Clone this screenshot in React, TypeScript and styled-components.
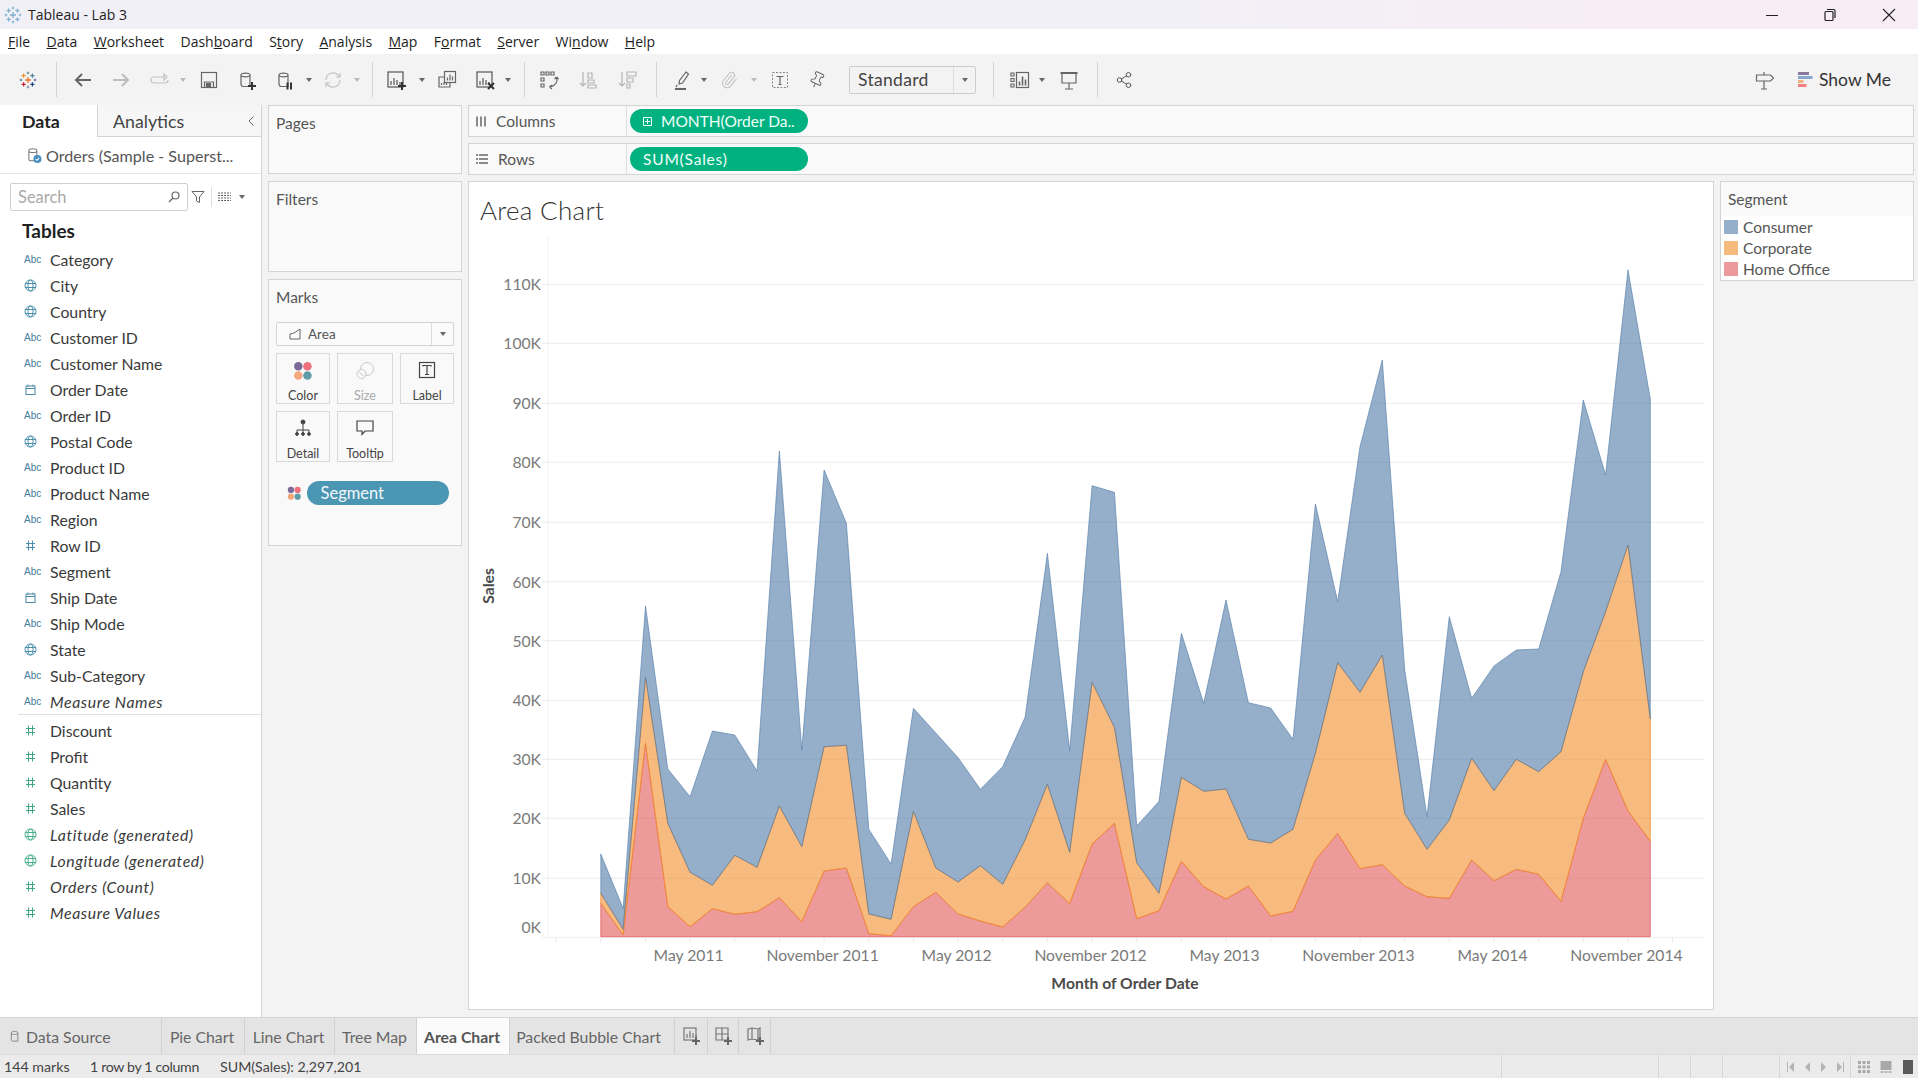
import React from "react";
import styled, { createGlobalStyle } from "styled-components";
import { Paperclip, Pin, Share2 } from "lucide-react";

const GlobalStyle = createGlobalStyle`
  html, body { margin: 0; padding: 0; background: #f3f3f3; }
  body { font-family: "Lato", "Liberation Sans", sans-serif; color: #333; overflow: hidden; }
  * { box-sizing: border-box; }
`;

const Page = styled.div`
  width: 1918px;
  height: 1078px;
  display: flex;
  flex-direction: column;
  overflow: hidden;
`;

/* ---------- window chrome ---------- */
const TitleBar = styled.div`
  height: 29px;
  flex: none;
  display: flex;
  align-items: center;
  padding-left: 4px;
  background: linear-gradient(90deg, #f0f0f6 0%, #f1f0f6 60%, #f8edf5 85%, #f8edf5 100%);
  font-family: "Open Sans", sans-serif;
  font-size: 14px;
  color: #222;
`;
const TitleText = styled.span`
  margin-left: 6px;
`;
const WinButtons = styled.div`
  margin-left: auto;
  display: flex;
`;
const WinButton = styled.div`
  width: 58.5px;
  height: 29px;
  display: flex;
  align-items: center;
  justify-content: center;
`;
const MenuBar = styled.div`
  height: 25px;
  flex: none;
  display: flex;
  align-items: center;
  gap: 16.4px;
  padding-left: 8px;
  background: #fff;
  font-family: "Open Sans", sans-serif;
  font-size: 14px;
  color: #1d1d1d;
`;
const Toolbar = styled.div`
  height: 51px;
  flex: none;
  display: flex;
  align-items: center;
  padding-left: 16px;
  background: #f3f3f3;
`;
const Tool = styled.div<{ $ml?: number; $w?: number }>`
  width: ${(p) => p.$w ?? 24}px;
  height: 24px;
  flex: none;
  margin-left: ${(p) => p.$ml ?? 0}px;
  display: flex;
  align-items: center;
  justify-content: center;
`;
const ToolSep = styled.div<{ $ml: number }>`
  width: 1px;
  height: 35px;
  flex: none;
  margin-left: ${(p) => p.$ml}px;
  background: #d2d2d2;
`;
const Caret = styled.div<{ $c?: string }>`
  width: 0;
  height: 0;
  border-left: 3.5px solid transparent;
  border-right: 3.5px solid transparent;
  border-top: 4px solid ${(p) => p.$c ?? "#666"};
`;
const FitSelect = styled.div`
  width: 127px;
  height: 28px;
  flex: none;
  margin-left: 20px;
  display: flex;
  align-items: center;
  border: 1px solid #cdcdcd;
  border-radius: 2px;
  font-size: 17.5px;
  color: #444;
`;
const FitText = styled.div`
  flex: 1;
  padding-left: 8px;
  letter-spacing: 0.3px;
`;
const FitArrow = styled.div`
  width: 22px;
  height: 100%;
  display: flex;
  align-items: center;
  justify-content: center;
  border-left: 1px solid #dcdcdc;
`;
const ToolRight = styled.div`
  margin-left: auto;
  display: flex;
  align-items: center;
  padding-right: 27px;
`;
const ShowMe = styled.div`
  margin-left: 21px;
  display: flex;
  align-items: center;
  gap: 6px;
  font-size: 17.5px;
  color: #333;
`;

/* ---------- main area ---------- */
const Main = styled.div`
  flex: 1;
  min-height: 0;
  display: flex;
  background: #f3f3f3;
`;
const DataPane = styled.div`
  width: 262px;
  flex: none;
  background: #fff;
  border-right: 1px solid #d4d4d4;
  display: flex;
  flex-direction: column;
`;
const PaneTabs = styled.div`
  height: 32px;
  flex: none;
  display: flex;
  font-size: 17.8px;
`;
const DataTab = styled.div`
  width: 98px;
  padding-left: 22px;
  display: flex;
  align-items: center;
  font-weight: 700;
  color: #222;
  border-right: 1px solid #d4d4d4;
  background: #fff;
`;
const AnalyticsTab = styled.div`
  flex: 1;
  padding-left: 15px;
  display: flex;
  align-items: center;
  color: #444;
  background: #f6f6f6;
  border-bottom: 1px solid #d4d4d4;
`;
const Collapse = styled.div`
  margin-left: auto;
  margin-right: 6px;
  display: flex;
`;
const SourceRow = styled.div`
  height: 37px;
  flex: none;
  display: flex;
  align-items: center;
  gap: 4px;
  padding-left: 26px;
  border-bottom: 1px solid #e6e6e6;
  font-size: 16.1px;
  color: #555;
`;
const SearchRow = styled.div`
  height: 28px;
  flex: none;
  margin-top: 9px;
  display: flex;
  align-items: center;
  padding-left: 10px;
`;
const SearchBox = styled.div`
  width: 178px;
  height: 28px;
  display: flex;
  align-items: center;
  justify-content: space-between;
  padding: 0 6px 0 7px;
  border: 1px solid #cfcfcf;
  border-radius: 2px;
  font-size: 16.5px;
  color: #a9a9a9;
`;
const SearchTool = styled.div<{ $ml: number }>`
  margin-left: ${(p) => p.$ml}px;
  display: flex;
  align-items: center;
`;
const SearchSep = styled.div`
  width: 1px;
  height: 20px;
  margin-left: 6px;
  background: #dedede;
`;
const SectionTitle = styled.div`
  height: 22px;
  margin: 8px 0 5px 22px;
  display: flex;
  align-items: center;
  font-size: 19px;
  font-weight: 700;
  color: #1f1f1f;
`;
const FieldList = styled.div`
  display: flex;
  flex-direction: column;
`;
const FieldRow = styled.div<{ $italic?: boolean }>`
  height: 26px;
  display: flex;
  align-items: center;
  font-size: 15.8px;
  font-style: ${(p) => (p.$italic ? "italic" : "normal")};
  letter-spacing: ${(p) => (p.$italic ? "0.6px" : "0")};
  color: #3a3a3a;
`;
const FieldIconBox = styled.div`
  width: 50px;
  flex: none;
  padding-left: 24px;
  display: flex;
  align-items: center;
`;
const AbcTag = styled.span`
  font-family: "Liberation Sans", sans-serif;
  font-size: 10px;
  font-style: normal;
  letter-spacing: 0;
  color: #3f7d9b;
`;
const FieldDivider = styled.div`
  height: 1px;
  margin: 0 0 2px 18px;
  background: #e0e0e0;
`;

const MiddleCol = styled.div`
  width: 194px;
  flex: none;
  margin-left: 6px;
  display: flex;
  flex-direction: column;
  gap: 7px;
`;
const Card = styled.div<{ $h: number }>`
  height: ${(p) => p.$h}px;
  flex: none;
  padding: 8px 7px;
  background: #f9f9f9;
  border: 1px solid #d4d4d4;
  font-size: 15.5px;
  color: #555;
`;
const MarkSelect = styled.div`
  height: 24px;
  margin-top: 16px;
  display: flex;
  align-items: center;
  background: #fbfbfb;
  border: 1px solid #d4d4d4;
  border-radius: 2px;
  font-size: 13.5px;
`;
const MarkName = styled.div`
  flex: 1;
  display: flex;
  align-items: center;
  gap: 5px;
  padding-left: 12px;
`;
const MarkArrow = styled.div`
  width: 22px;
  height: 100%;
  display: flex;
  align-items: center;
  justify-content: center;
  border-left: 1px solid #dcdcdc;
`;
const MarkGrid = styled.div`
  margin-top: 7px;
  display: grid;
  grid-template-columns: 54px 56px 54px;
  grid-auto-rows: 51px;
  gap: 7px;
`;
const MarkBtn = styled.div<{ $off?: boolean }>`
  display: flex;
  flex-direction: column;
  align-items: center;
  justify-content: space-between;
  padding: 7px 0 0;
  border: 1px solid #d8d8d8;
  font-size: 12.5px;
  line-height: 14px;
  color: ${(p) => (p.$off ? "#aaa" : "#444")};
`;
const SegmentRow = styled.div`
  margin-top: 19px;
  display: flex;
  align-items: center;
  gap: 5px;
  padding-left: 11px;
`;
const SegmentPill = styled.div`
  width: 142px;
  height: 24px;
  padding-left: 14px;
  display: flex;
  align-items: center;
  border-radius: 12px;
  background: #4a96b3;
  font-size: 16.5px;
  color: #f2f8fa;
`;

const RightCol = styled.div`
  flex: 1;
  min-width: 0;
  margin-left: 6px;
  padding: 0 4px 7px 0;
  display: flex;
  flex-direction: column;
  gap: 6px;
`;
const Shelf = styled.div`
  height: 32px;
  flex: none;
  display: flex;
  align-items: center;
  background: #f9f9f9;
  border: 1px solid #d4d4d4;
`;
const ShelfLabel = styled.div`
  width: 158px;
  height: 100%;
  flex: none;
  display: flex;
  align-items: center;
  gap: 10px;
  padding-left: 7px;
  border-right: 1px solid #dedede;
  font-size: 15.5px;
  color: #555;
`;
const GreenPill = styled.div<{ $wide?: boolean }>`
  width: 178px;
  height: 24px;
  margin-left: 3px;
  display: flex;
  align-items: center;
  gap: 9px;
  padding-left: 13px;
  border-radius: 12px;
  background: #02b180;
  font-size: 15.5px;
  letter-spacing: ${(p) => (p.$wide ? "0.8px" : "0")};
  color: #effff9;
`;
const VizRow = styled.div`
  flex: 1;
  min-height: 0;
  display: flex;
  gap: 6px;
`;
const VizCard = styled.div`
  width: 1246px;
  flex: none;
  display: flex;
  flex-direction: column;
  background: #fff;
  border: 1px solid #d4d4d4;
  overflow: hidden;
`;
const VizTitle = styled.div`
  height: 50px;
  flex: none;
  padding: 12px 0 0 11px;
  font-size: 26px;
  font-weight: 300;
  color: #333;
  letter-spacing: 0.3px;
`;
const Legend = styled.div`
  width: 194px;
  height: 100px;
  flex: none;
  display: flex;
  flex-direction: column;
  background: #fff;
  border: 1px solid #d4d4d4;
`;
const LegendHead = styled.div`
  height: 34px;
  flex: none;
  display: flex;
  align-items: center;
  padding-left: 7px;
  background: #f9f9f9;
  font-size: 15.5px;
  color: #555;
`;
const LegendItem = styled.div`
  height: 21px;
  flex: none;
  display: flex;
  align-items: center;
  gap: 5px;
  padding-left: 3px;
  font-size: 15.5px;
  color: #555;
`;
const Swatch = styled.div<{ $c: string }>`
  width: 14px;
  height: 14px;
  background: ${(p) => p.$c};
`;

/* ---------- sheet tabs and status ---------- */
const SheetTabs = styled.div`
  height: 37px;
  flex: none;
  display: flex;
  background: #e4e4e4;
  border-top: 1px solid #d4d4d4;
  font-size: 15.8px;
  color: #666;
`;
const SheetTab = styled.div<{ $w: number; $active?: boolean; $pr?: number }>`
  width: ${(p) => p.$w}px;
  flex: none;
  display: flex;
  align-items: center;
  justify-content: center;
  padding-right: ${(p) => p.$pr ?? 2}px;
  border-right: 1px solid #d2d2d2;
  background: ${(p) => (p.$active ? "#fbfbfb" : "transparent")};
  font-weight: ${(p) => (p.$active ? 700 : 400)};
  color: ${(p) => (p.$active ? "#555" : "#666")};
`;
const SourceTab = styled(SheetTab)`
  justify-content: flex-start;
  gap: 4px;
  padding-left: 9px;
`;
const StatusBar = styled.div`
  height: 24px;
  flex: none;
  display: flex;
  align-items: center;
  background: #ebebeb;
  border-top: 1px solid #dcdcdc;
  font-size: 14.2px;
  color: #444;
`;
const StatusText = styled.span<{ $w: number; $pl?: number; $tight?: boolean }>`
  width: ${(p) => p.$w}px;
  padding-left: ${(p) => p.$pl ?? 0}px;
  letter-spacing: ${(p) => (p.$tight ? "-0.35px" : "0")};
  flex: none;
`;
const StatusCell = styled.div<{ $w: number }>`
  width: ${(p) => p.$w}px;
  height: 100%;
  flex: none;
  display: flex;
  align-items: center;
  padding: 0 4px;
  border-left: 1px solid #d6d6d6;
`;

/* ---------- chart data, in page pixels ---------- */
const X0 = 600.8;
const STEP = 22.33;
const BASE = 936.7;
const topLine = [854, 908.3, 606, 769, 796.7, 731, 735, 771, 451, 750, 470, 523.3, 829.3, 864, 708.3, 733, 757.7, 789.3, 766.7, 717.3, 553.3, 750.7, 485.7, 492.3, 826, 801.3, 633.3, 703.3, 600, 702.7, 708, 739.3, 504, 601.7, 446.7, 360, 670, 816.7, 616.7, 698.3, 666, 650, 649, 571.7, 400, 475, 270, 399];
const midLine = [893.3, 929.3, 677.3, 823.3, 872.3, 885.3, 855.3, 867.3, 806, 846.7, 746.7, 745.3, 914, 919.3, 811.3, 868, 882, 865.7, 884.3, 840, 784.3, 852.3, 682.3, 727.3, 862.7, 893.3, 777.3, 791.3, 789, 839.3, 843, 829.3, 753.3, 662.7, 692.3, 655, 813.3, 849.3, 820, 758.3, 790.7, 759.3, 771.7, 751.7, 671.7, 611.7, 545, 719];
const lowLine = [903.3, 935, 743.3, 906.7, 926.7, 908.7, 914.3, 911.7, 897.7, 921.7, 871, 868, 933.7, 935.7, 906.7, 892.3, 914, 921, 927, 907.3, 882.7, 903.7, 844, 823.3, 918.7, 910.7, 861.3, 886.7, 899, 886, 916, 911.3, 860, 833.3, 868.7, 864.7, 886, 896.7, 898.3, 860, 880.7, 869.3, 874.3, 901.3, 818.3, 759.3, 811, 841.3];

const xAt = (i: number) => X0 + STEP * i;
const forward = (ys: number[]) => ys.map((y, i) => `${xAt(i).toFixed(1)},${y}`);
const band = (upper: number[], lower: number[]) =>
  [...forward(upper), ...forward(lower).reverse()].join(" ");

const yTicks = [
  { t: "110K", y: 284.3 },
  { t: "100K", y: 343.3 },
  { t: "90K", y: 403.3 },
  { t: "80K", y: 462.3 },
  { t: "70K", y: 522.3 },
  { t: "60K", y: 581.7 },
  { t: "50K", y: 640.7 },
  { t: "40K", y: 700.3 },
  { t: "30K", y: 759.3 },
  { t: "20K", y: 818.3 },
  { t: "10K", y: 878.3 },
];
const xLabels = [
  { t: "May 2011", i: 4 },
  { t: "November 2011", i: 10 },
  { t: "May 2012", i: 16 },
  { t: "November 2012", i: 22 },
  { t: "May 2013", i: 28 },
  { t: "November 2013", i: 34 },
  { t: "May 2014", i: 40 },
  { t: "November 2014", i: 46 },
];
const minorTicks = Array.from({ length: 26 }, (_, k) => -2 + k * 2);

const AxisText = styled.text`
  font-family: "Lato", sans-serif;
  font-size: 15.7px;
  fill: #7a7a7a;
`;
const AxisTitle = styled.text`
  font-family: "Lato", sans-serif;
  font-size: 15.7px;
  font-weight: 700;
  fill: #4a4a4a;
`;

function AreaChart() {
  const zero = lowLine.map(() => BASE);
  return (
    <svg width={1244} height={777} viewBox="469 232 1244 777">
      <line x1={548} x2={548} y1={236} y2={937} stroke="#f2f2f2" />
      {yTicks.map((t) => (
        <g key={t.t}>
          <line x1={542} x2={1704} y1={t.y} y2={t.y} stroke="#f0f0f0" strokeWidth={1.2} />
          <AxisText x={541} y={t.y + 6} textAnchor="end">{t.t}</AxisText>
        </g>
      ))}
      <line x1={542} x2={1704} y1={937.3} y2={937.3} stroke="#efefef" />
      <AxisText x={541} y={933} textAnchor="end">0K</AxisText>
      {minorTicks.map((i) => (
        <line key={i} x1={xAt(i)} x2={xAt(i)} y1={937} y2={943} stroke="#ececec" />
      ))}
      <polygon points={band(lowLine, zero)} fill="#e15759" fillOpacity={0.6} stroke="#e15759" strokeOpacity={0.7} />
      <polygon points={band(midLine, lowLine)} fill="#f28e2b" fillOpacity={0.6} stroke="#f28e2b" strokeOpacity={0.75} />
      <polygon points={band(topLine, midLine)} fill="#4e79a7" fillOpacity={0.6} stroke="#4e79a7" strokeOpacity={0.6} />
      {xLabels.map((l) => (
        <AxisText key={l.t} x={xAt(l.i) - 1.5} y={961} textAnchor="middle">{l.t}</AxisText>
      ))}
      <AxisTitle x={1125} y={989} textAnchor="middle">Month of Order Date</AxisTitle>
      <AxisTitle transform="translate(494 586) rotate(-90)" textAnchor="middle">Sales</AxisTitle>
    </svg>
  );
}

/* ---------- icons ---------- */
const TableauMark = ({ faded }: { faded?: boolean }) => {
  const tone = (col: string) => (faded ? "#7fb0d0" : col);
  const plus = (x: number, y: number, r: number, w: number, col: string) => (
    <path d={`M${x - r} ${y}H${x + r}M${x} ${y - r}V${y + r}`} stroke={tone(col)} strokeWidth={w} />
  );
  return (
    <svg width={18} height={18} viewBox="0 0 18 18" fill="none">
      {plus(9, 2, 1.4, 1, "#5b879b")}
      {plus(2, 9, 1.4, 1, "#5b879b")}
      {plus(16, 9, 1.4, 1, "#5b6f9b")}
      {plus(9, 16, 1.4, 1, "#7a8fa5")}
      {plus(4.6, 4.6, 2.1, 1.2, "#eb912b")}
      {plus(13.4, 4.6, 2.1, 1.2, "#4f8199")}
      {plus(4.6, 13.4, 2.1, 1.2, "#c72035")}
      {plus(13.4, 13.4, 2.1, 1.2, "#1f447e")}
      {plus(9, 9, 3, 1.3, "#e8762b")}
    </svg>
  );
};

const Glyph = ({ c = "#666", children, w = 24 }: { c?: string; children: React.ReactNode; w?: number }) => (
  <svg width={w} height={24} viewBox={`0 0 ${w} 24`} fill="none" stroke={c} strokeWidth={1.2}>
    {children}
  </svg>
);
const CylinderPath = "M6 7c0-2.6 9-2.6 9 0v11.5H8.5A2.5 2.5 0 0 1 6 16zM6 7c0 2.4 9 2.4 9 0";
const ChartBox = ({ x = 5, y = 5, s = 14 }: { x?: number; y?: number; s?: number }) => (
  <>
    <rect x={x} y={y} width={s} height={s} />
    <path d={`M${x + 3} ${y + s - 2}v-4M${x + 6} ${y + s - 2}v-7M${x + 9} ${y + s - 2}v-5M${x + 12} ${y + s - 2}v-3`} />
  </>
);
const BlackPlus = ({ x, y, c = "#333" }: { x: number; y: number; c?: string }) => (
  <path d={`M${x - 4} ${y}h8M${x} ${y - 4}v8`} stroke={c} strokeWidth={2} />
);

const GlobeIcon = ({ c }: { c: string }) => (
  <svg width={13} height={13} viewBox="0 0 13 13" fill="none" stroke={c} strokeWidth={1}>
    <circle cx={6.5} cy={6.5} r={5.5} />
    <ellipse cx={6.5} cy={6.5} rx={2.5} ry={5.5} />
    <path d="M1 4.5h11M1 8.5h11" />
  </svg>
);
const CalendarIcon = ({ c }: { c: string }) => (
  <svg width={13} height={13} viewBox="0 0 13 13" fill="none" stroke={c} strokeWidth={1}>
    <rect x={2} y={3} width={9} height={8.5} />
    <path d="M2 5.5h9M4 1.5v2M9 1.5v2" />
  </svg>
);
const HashIcon = ({ c }: { c: string }) => (
  <svg width={13} height={13} viewBox="0 0 13 13" fill="none" stroke={c} strokeWidth={1}>
    <path d="M4.5 1.5v10M8.5 1.5v10M2 4.5h9M2 8.5h9" />
  </svg>
);
const CylinderSmall = ({ c = "#777", s = 14, badge }: { c?: string; s?: number; badge?: boolean }) => (
  <svg width={s} height={s} viewBox="0 0 14 14" fill="none" stroke={c} strokeWidth={0.9}>
    <path d="M2.500 3c0-2 7-2 7 0v9H4S2.500 12 2.500 10.500zM2.500 3.500c0 1.800 7 1.800 7 0" />
    {badge && (
      <>
        <circle cx={10} cy={10.500} r={3.500} fill="#4a8fc0" stroke="none" />
        <path d="M8.400 10.500l1.200 1.200 2-2.200" stroke="#fff" />
      </>
    )}
  </svg>
);
const FourDots = ({ r }: { r: number }) => (
  <svg width={r * 5.2} height={r * 5.2} viewBox="0 0 26 26">
    <circle cx={7} cy={7} r={5.6} fill="#7b6a96" />
    <circle cx={19} cy={7} r={5.6} fill="#ef6f7d" />
    <circle cx={7} cy={19} r={5.6} fill="#f4a77c" />
    <circle cx={19} cy={19} r={5.6} fill="#5f9ba6" />
  </svg>
);

type Kind = "abc" | "globe" | "date" | "hash" | "mHash" | "mGlobe";
const FieldIcon = ({ kind }: { kind: Kind }) => {
  if (kind === "abc") return <AbcTag>Abc</AbcTag>;
  if (kind === "globe") return <GlobeIcon c="#4a90ad" />;
  if (kind === "date") return <CalendarIcon c="#4a86a3" />;
  if (kind === "hash") return <HashIcon c="#4a90ad" />;
  if (kind === "mGlobe") return <GlobeIcon c="#4db08d" />;
  return <HashIcon c="#3fa781" />;
};

const dimensions: { n: string; k: Kind; i?: boolean }[] = [
  { n: "Category", k: "abc" },
  { n: "City", k: "globe" },
  { n: "Country", k: "globe" },
  { n: "Customer ID", k: "abc" },
  { n: "Customer Name", k: "abc" },
  { n: "Order Date", k: "date" },
  { n: "Order ID", k: "abc" },
  { n: "Postal Code", k: "globe" },
  { n: "Product ID", k: "abc" },
  { n: "Product Name", k: "abc" },
  { n: "Region", k: "abc" },
  { n: "Row ID", k: "hash" },
  { n: "Segment", k: "abc" },
  { n: "Ship Date", k: "date" },
  { n: "Ship Mode", k: "abc" },
  { n: "State", k: "globe" },
  { n: "Sub-Category", k: "abc" },
  { n: "Measure Names", k: "abc", i: true },
];
const measures: { n: string; k: Kind; i?: boolean }[] = [
  { n: "Discount", k: "mHash" },
  { n: "Profit", k: "mHash" },
  { n: "Quantity", k: "mHash" },
  { n: "Sales", k: "mHash" },
  { n: "Latitude (generated)", k: "mGlobe", i: true },
  { n: "Longitude (generated)", k: "mGlobe", i: true },
  { n: "Orders (Count)", k: "mHash", i: true },
  { n: "Measure Values", k: "mHash", i: true },
];

export default function App() {
  return (
    <Page>
      <GlobalStyle />
      <TitleBar>
        <TableauMark faded />
        <TitleText>Tableau - Lab 3</TitleText>
        <WinButtons>
          <WinButton>
            <svg width={14} height={14} viewBox="0 0 14 14" stroke="#222"><path d="M1 7.500h12" /></svg>
          </WinButton>
          <WinButton>
            <svg width={14} height={14} viewBox="0 0 14 14" fill="none" stroke="#222" strokeWidth={1.2}>
              <rect x={2} y={3.500} width={8} height={9} rx={1} />
              <path d="M4 1.500h6.500a1.500 1.500 0 0 1 1.500 1.500v7" />
            </svg>
          </WinButton>
          <WinButton>
            <svg width={14} height={14} viewBox="0 0 14 14" stroke="#222" strokeWidth={1.1}><path d="M1 1l12 12M13 1L1 13" /></svg>
          </WinButton>
        </WinButtons>
      </TitleBar>
      <MenuBar>
        <span><u>F</u>ile</span>
        <span><u>D</u>ata</span>
        <span><u>W</u>orksheet</span>
        <span>Dash<u>b</u>oard</span>
        <span>S<u>t</u>ory</span>
        <span><u>A</u>nalysis</span>
        <span><u>M</u>ap</span>
        <span>F<u>o</u>rmat</span>
        <span><u>S</u>erver</span>
        <span>Wi<u>n</u>dow</span>
        <span><u>H</u>elp</span>
      </MenuBar>
      <Toolbar>
        <Tool><TableauMark /></Tool>
        <ToolSep $ml={16} />
        <Tool $ml={14}><Glyph c="#666"><path d="M20 12H5M11 6l-6 6 6 6" strokeWidth={2} /></Glyph></Tool>
        <Tool $ml={14}><Glyph c="#bcbcbc"><path d="M4 12h15M13 6l6 6-6 6" strokeWidth={2} /></Glyph></Tool>
        <Tool $ml={14}><Glyph c="#c4c4c4"><path d="M17 9H7a3 3 0 0 0 0 6h11a3 3 0 0 0 3-3M17 6v6l3-3z" /></Glyph></Tool>
        <Tool $ml={7} $w={10}><Caret $c="#bbb" /></Tool>
        <Tool $ml={9}>
          <Glyph c="#666">
            <rect x={4.500} y={4.500} width={15} height={15} />
            <path d="M7.500 19v-5h9v5" />
            <rect x={9.500} y={15.500} width={4} height={3.500} fill="#666" />
          </Glyph>
        </Tool>
        <Tool $ml={14}><Glyph c="#666"><path d={CylinderPath} /><BlackPlus x={17} y={18} /></Glyph></Tool>
        <Tool $ml={14}><Glyph c="#666"><path d={CylinderPath} /><path d="M14.500 14.500v7M18 14.500v7" stroke="#333" strokeWidth={2} /></Glyph></Tool>
        <Tool $ml={7} $w={10}><Caret /></Tool>
        <Tool $ml={7}><Glyph c="#c4c4c4"><path d="M5 12a7 7 0 0 1 12-5l2 2M19 12a7 7 0 0 1-12 5l-2-2M19 5v4h-4M5 19v-4h4" /></Glyph></Tool>
        <Tool $ml={7} $w={10}><Caret $c="#bbb" /></Tool>
        <ToolSep $ml={10} />
        <Tool $ml={11}><Glyph c="#555"><ChartBox x={4} y={4} s={15} /><BlackPlus x={18} y={18} /></Glyph></Tool>
        <Tool $ml={9} $w={10}><Caret /></Tool>
        <Tool $ml={8}>
          <Glyph c="#666">
            <rect x={9.500} y={3.500} width={11} height={11} />
            <path d="M12.500 12.500v-3M15 12.500v-6M17.500 12.500v-4M9.500 9H4v10h11v-4.500M6.500 17v-2M9 17v-3M11.500 17v-2" />
          </Glyph>
        </Tool>
        <Tool $ml={14}><Glyph c="#555"><ChartBox x={4} y={4} s={15} /><path d="M15 15l6 6M21 15l-6 6" stroke="#333" strokeWidth={2} /></Glyph></Tool>
        <Tool $ml={6} $w={10}><Caret /></Tool>
        <ToolSep $ml={11} />
        <Tool $ml={12}>
          <Glyph c="#666">
            <path d="M4 4h3v3H4zM9 4h3v3H9zM14 4h3v3h-3zM4 10h3v3H4zM4 16h3v3H4z" />
            <path d="M19.500 9c1.500 5-1 9-7 10M12.500 19l2.500-2M12.500 19l2.500 2M19.500 9l-2 2M19.500 9l2 2" />
          </Glyph>
        </Tool>
        <Tool $ml={16}>
          <Glyph c="#b5b5b5">
            <path d="M6 4v14M3 15l3 3 3-3" />
            <path d="M11 5h4v5h-4zM11 12h6v3h-6zM11 17h8v3h-8z" />
          </Glyph>
        </Tool>
        <Tool $ml={15}>
          <Glyph c="#b5b5b5">
            <path d="M6 4v14M3 15l3 3 3-3" />
            <path d="M11 4h9v4h-9zM11 10h6v4h-6zM11 16h3v4h-3z" />
          </Glyph>
        </Tool>
        <ToolSep $ml={16} />
        <Tool $ml={14}>
          <Glyph c="#666">
            <path d="M15 4l2.500 2-6 9-3.500 1 .5-3.500z" />
            <path d="M6 17l-1 2" />
            <path d="M4 21h11" strokeWidth={2} />
          </Glyph>
        </Tool>
        <Tool $ml={4} $w={10}><Caret /></Tool>
        <Tool $ml={8}><Paperclip size={18} color="#c2c2c2" strokeWidth={1.4} style={{ transform: "rotate(-5deg)" }} /></Tool>
        <Tool $ml={8} $w={10}><Caret $c="#bbb" /></Tool>
        <Tool $ml={9}>
          <Glyph c="#888">
            <rect x={4.500} y={4.500} width={15} height={15} strokeDasharray="2 1.500" strokeWidth={1} />
            <path d="M8.500 8.500h7M12 8.500v8M10.500 16.500h3" stroke="#666" />
          </Glyph>
        </Tool>
        <Tool $ml={13}><Pin size={18} color="#666" strokeWidth={1.3} style={{ transform: "rotate(25deg)" }} /></Tool>
        <FitSelect>
          <FitText>Standard</FitText>
          <FitArrow><Caret /></FitArrow>
        </FitSelect>
        <ToolSep $ml={17} />
        <Tool $ml={14}>
          <Glyph c="#666">
            <path d="M3 5h3v3H3zM3 10.500h3v3H3zM3 16h3v3H3z" />
            <rect x={8.500} y={4.500} width={12} height={15} />
            <path d="M11.500 17.500v-4M14.500 17.500v-9M17.500 17.500v-6" strokeWidth={1.600} />
          </Glyph>
        </Tool>
        <Tool $ml={5} $w={10}><Caret /></Tool>
        <Tool $ml={10}>
          <Glyph c="#666">
            <path d="M3.500 5h17" strokeWidth={2} />
            <path d="M5 5v10h14V5M12 15v6M8 21h8" />
          </Glyph>
        </Tool>
        <ToolSep $ml={16} />
        <Tool $ml={14}><Share2 size={18} color="#555" strokeWidth={1.3} /></Tool>
        <ToolRight>
          <Glyph c="#666">
            <path d="M3.500 7h14l3 3-3 3h-14zM11 4v3M11 13v8M8 21h6" />
          </Glyph>
          <ShowMe>
            <svg width={15} height={16} viewBox="0 0 15 16">
              <rect y={0} width={11} height={3} fill="#8a7aa0" />
              <rect y={4} width={14.500} height={3} fill="#86a8cf" />
              <rect y={8} width={5.500} height={3} fill="#f2b181" />
              <rect y={12} width={8.500} height={3} fill="#f27d82" />
            </svg>
            Show Me
          </ShowMe>
        </ToolRight>
      </Toolbar>

      <Main>
        <DataPane>
          <PaneTabs>
            <DataTab>Data</DataTab>
            <AnalyticsTab>
              Analytics
              <Collapse>
                <svg width={8} height={12} viewBox="0 0 8 12" fill="none" stroke="#666"><path d="M6.500 1.500L2 6l4.500 4.500" /></svg>
              </Collapse>
            </AnalyticsTab>
          </PaneTabs>
          <SourceRow>
            <CylinderSmall s={16} badge />
            Orders (Sample - Superst...
          </SourceRow>
          <SearchRow>
            <SearchBox>
              Search
              <svg width={14} height={14} viewBox="0 0 14 14" fill="none" stroke="#666" strokeWidth={1.2}>
                <circle cx={8.500} cy={5.500} r={3.500} />
                <path d="M6 8l-4 4" />
              </svg>
            </SearchBox>
            <SearchTool $ml={3}>
              <svg width={14} height={14} viewBox="0 0 14 14" fill="none" stroke="#666"><path d="M1 1.500h12L8.500 7v5.500l-3-1.500V7z" /></svg>
            </SearchTool>
            <SearchSep />
            <SearchTool $ml={6}>
              <svg width={13} height={10} viewBox="0 0 13 10" fill="none" stroke="#666" strokeDasharray="2 1"><path d="M0 1h13M0 3.500h13M0 6h13M0 8.500h13" /></svg>
            </SearchTool>
            <SearchTool $ml={8}><Caret /></SearchTool>
          </SearchRow>
          <SectionTitle>Tables</SectionTitle>
          <FieldList>
            {dimensions.map((f) => (
              <FieldRow key={f.n} $italic={f.i}>
                <FieldIconBox><FieldIcon kind={f.k} /></FieldIconBox>
                {f.n}
              </FieldRow>
            ))}
            <FieldDivider />
            {measures.map((f) => (
              <FieldRow key={f.n} $italic={f.i}>
                <FieldIconBox><FieldIcon kind={f.k} /></FieldIconBox>
                {f.n}
              </FieldRow>
            ))}
          </FieldList>
        </DataPane>

        <MiddleCol>
          <Card $h={69}>Pages</Card>
          <Card $h={91}>Filters</Card>
          <Card $h={267}>
            Marks
            <MarkSelect>
              <MarkName>
                <svg width={14} height={12} viewBox="0 0 14 12" fill="none" stroke="#666"><path d="M1 11V6l4-1 6-4v10z" /></svg>
                Area
              </MarkName>
              <MarkArrow><Caret /></MarkArrow>
            </MarkSelect>
            <MarkGrid>
              <MarkBtn><FourDots r={3.800} />Color</MarkBtn>
              <MarkBtn $off>
                <svg width={20} height={20} viewBox="0 0 20 20" fill="none" stroke="#c8c8c8">
                  <circle cx={12} cy={8} r={6.500} />
                  <circle cx={6.500} cy={13} r={4.500} fill="#f9f9f9" />
                  <path d="M4 11l5 4" />
                </svg>
                Size
              </MarkBtn>
              <MarkBtn>
                <svg width={18} height={18} viewBox="0 0 18 18" fill="none" stroke="#444" strokeWidth={1.2}>
                  <rect x={1.500} y={1.500} width={15} height={15} />
                  <path d="M5 5.500v-1h8v1M9 4.500v9M7 13.500h4" />
                </svg>
                Label
              </MarkBtn>
              <MarkBtn>
                <svg width={18} height={18} viewBox="0 0 18 18" fill="#444" stroke="#444">
                  <circle cx={9} cy={3} r={2} />
                  <path d="M9 5v6M3 14v-3h12v3M9 11v3" fill="none" />
                  <circle cx={3} cy={15} r={1.400} />
                  <circle cx={9} cy={15} r={1.400} />
                  <circle cx={15} cy={15} r={1.400} />
                </svg>
                Detail
              </MarkBtn>
              <MarkBtn>
                <svg width={18} height={18} viewBox="0 0 18 18" fill="none" stroke="#444" strokeWidth={1.2}>
                  <path d="M1 2h16v10H9l-3 3.500V12H1z" />
                </svg>
                Tooltip
              </MarkBtn>
            </MarkGrid>
            <SegmentRow>
              <FourDots r={2.800} />
              <SegmentPill>Segment</SegmentPill>
            </SegmentRow>
          </Card>
        </MiddleCol>

        <RightCol>
          <Shelf>
            <ShelfLabel>
              <svg width={10} height={12} viewBox="0 0 10 12" stroke="#666" strokeWidth={1.500}><path d="M1 1.500v10M5 1.500v10M9 1.500v10" /></svg>
              Columns
            </ShelfLabel>
            <GreenPill>
              <svg width={9} height={9} viewBox="0 0 9 9" fill="none" stroke="#effff9"><path d="M.5.500h8v8h-8zM4.500 2v5M2 4.500h5" /></svg>
              MONTH(Order Da..
            </GreenPill>
          </Shelf>
          <Shelf>
            <ShelfLabel>
              <svg width={12} height={10} viewBox="0 0 12 10" stroke="#666" strokeWidth={1.300}><path d="M0 1h2M3 1h9M0 5h2M3 5h9M0 9h2M3 9h9" /></svg>
              Rows
            </ShelfLabel>
            <GreenPill $wide>SUM(Sales)</GreenPill>
          </Shelf>
          <VizRow>
            <VizCard>
              <VizTitle>Area Chart</VizTitle>
              <AreaChart />
            </VizCard>
            <Legend>
              <LegendHead>Segment</LegendHead>
              <LegendItem><Swatch $c="#95aeca" />Consumer</LegendItem>
              <LegendItem><Swatch $c="#f6ba7d" />Corporate</LegendItem>
              <LegendItem><Swatch $c="#ed9a9c" />Home Office</LegendItem>
            </Legend>
          </VizRow>
        </RightCol>
      </Main>

      <SheetTabs>
        <SourceTab $w={162}><CylinderSmall s={13} />Data Source</SourceTab>
        <SheetTab $w={83}>Pie Chart</SheetTab>
        <SheetTab $w={90}>Line Chart</SheetTab>
        <SheetTab $w={82}>Tree Map</SheetTab>
        <SheetTab $w={93} $active>Area Chart</SheetTab>
        <SheetTab $w={165} $pr={7}>Packed Bubble Chart</SheetTab>
        <SheetTab $w={33} $pr={0}>
          <Glyph c="#777"><ChartBox x={5} y={4} s={12} /><BlackPlus x={17} y={17} c="#666" /></Glyph>
        </SheetTab>
        <SheetTab $w={31} $pr={0}>
          <Glyph c="#777"><path d="M5 4h12v12H5zM5 10h12M11 4v12" /><BlackPlus x={17} y={17} c="#666" /></Glyph>
        </SheetTab>
        <SheetTab $w={32} $pr={0}>
          <Glyph c="#777"><path d="M5 5l4-1 6 1 2-1v10l-2 2-6-1-4 1zM9 4v11M15 5v11" /><BlackPlus x={17} y={17} c="#666" /></Glyph>
        </SheetTab>
      </SheetTabs>
      <StatusBar>
        <StatusText $w={90} $pl={4}>144 marks</StatusText>
        <StatusText $w={130} $tight>1 row by 1 column</StatusText>
        <StatusText $w={1281}>SUM(Sales): 2,297,201</StatusText>
        <StatusCell $w={157} />
        <StatusCell $w={32} />
        <StatusCell $w={32} />
        <StatusCell $w={57} />
        <StatusCell $w={71}>
          <svg width={62} height={12} viewBox="0 0 62 12" fill="#b4b4b4" style={{ flex: "none" }}>
            <path d="M3 1h1v10H3zM10 1v10L5 6zM26 1v10l-5-5zM37 11V1l5 5zM53 11V1l5 5zM59 1h1v10h-1z" />
          </svg>
        </StatusCell>
        <StatusCell $w={68}>
          <svg width={64} height={16} viewBox="0 0 64 16" style={{ flex: "none" }}>
            <path d="M3 2h3v3H3zM7.500 2h3v3h-3zM12 2h3v3h-3zM3 6.500h3v3H3zM7.500 6.500h3v3h-3zM12 6.500h3v3h-3zM3 11h3v3H3zM7.500 11h3v3h-3zM12 11h3v3h-3z" fill="#a8a8a8" />
            <path d="M25.500 2h11v9h-11z" fill="#a8a8a8" />
            <path d="M25.500 12h3v2h-3zM29.500 12h3v2h-3zM33.500 12h3v2h-3z" fill="#b8b8b8" />
            <path d="M48 1h10v14H48z" fill="#5a5a5a" />
          </svg>
        </StatusCell>
      </StatusBar>
    </Page>
  );
}
